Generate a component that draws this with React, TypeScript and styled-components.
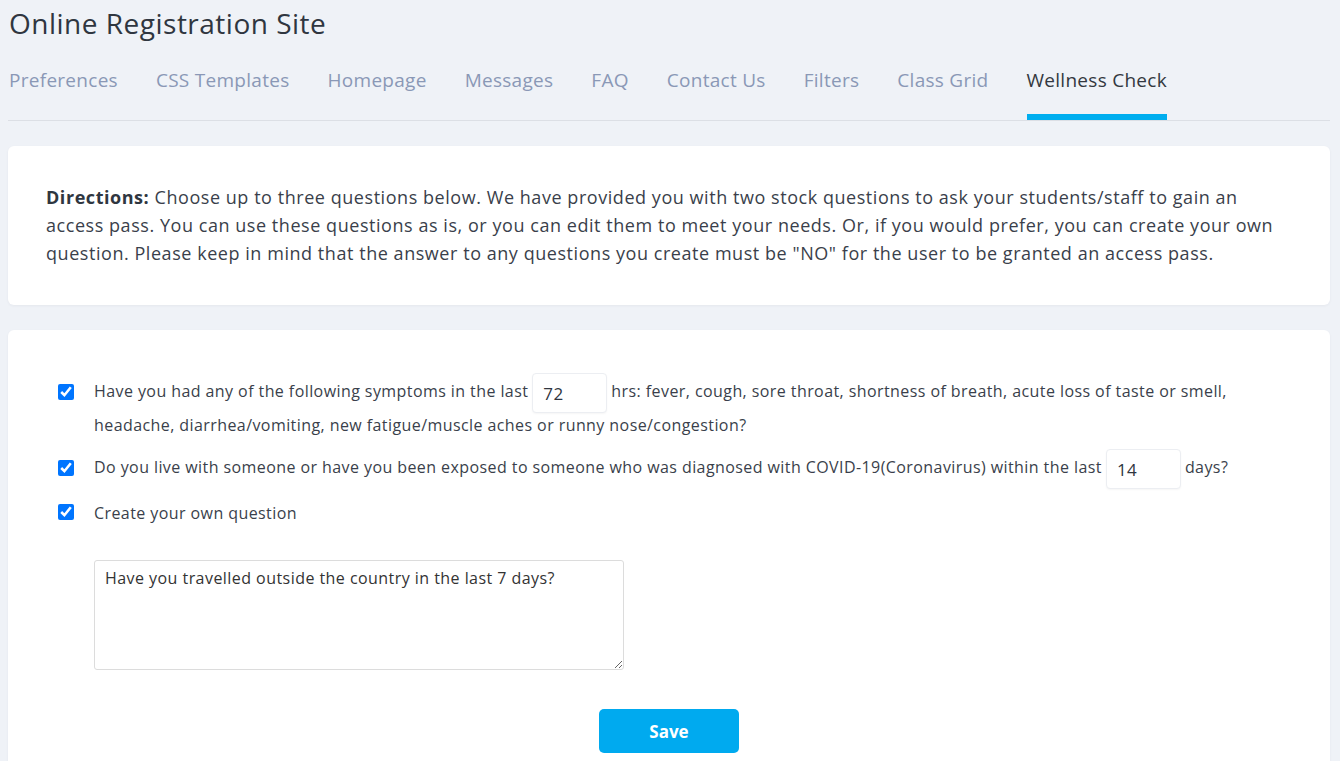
import React from "react";
import styled, { createGlobalStyle } from "styled-components";

const Global = createGlobalStyle`
  html, body { margin: 0; padding: 0; }
  body {
    background: #eff2f7;
    font-family: "Open Sans", "Noto Sans", sans-serif;
    color: #3a3f4b;
  }
`;

const Page = styled.div`
  padding: 0 10px 0 8px;
`;

const Title = styled.h1`
  margin: 0;
  padding: 6px 0 0 1px;
  height: 34px;
  font-size: 28px;
  font-weight: 400;
  line-height: 34px;
  letter-spacing: 0.5px;
  color: #2f3640;
`;

const Tabs = styled.nav`
  display: flex;
  gap: 38px;
  margin-top: 23px;
  border-bottom: 1px solid #dcdfe5;
  padding-left: 1px;
`;

const Tab = styled.a<{ $active?: boolean }>`
  display: block;
  font-size: 19px;
  line-height: 28px;
  letter-spacing: 0.28px;
  padding: 3px 0 20px;
  color: ${(p) => (p.$active ? "#333840" : "#8a98b6")};
  border-bottom: 6px solid ${(p) => (p.$active ? "#00aeef" : "transparent")};
  text-decoration: none;
  cursor: pointer;
`;

const Card = styled.section<{ $top: number }>`
  background: #fff;
  border-radius: 6px;
  box-shadow: 0 1px 3px rgba(30, 40, 60, 0.05);
  margin-top: ${(p) => p.$top}px;
`;

const DirectionsCard = styled(Card)`
  padding: 37px 38px 38px;
`;

const Directions = styled.p`
  margin: 0;
  font-size: 18px;
  line-height: 28px;
  letter-spacing: 0.55px;
  color: #3a3f4b;
  b { font-weight: 700; color: #2f3640; }
`;

const QuestionsCard = styled(Card)`
  padding: 42px 40px 40px 50px;
`;

const Question = styled.div`
  display: flex;
  align-items: flex-start;
  margin-bottom: 11px;
`;

const CheckCell = styled.div<{ $h: number }>`
  flex: 0 0 16px;
  height: ${(p) => p.$h}px;
  display: flex;
  align-items: center;
  margin-right: 20px;
`;

const Check = styled.input`
  width: 16px;
  height: 16px;
  margin: 0;
  accent-color: #0075ff;
`;

const QText = styled.div`
  font-size: 16px;
  line-height: 24px;
  letter-spacing: 0.42px;
  color: #3a3f4b;
  padding-top: 1px;
`;

const NumInput = styled.input`
  box-sizing: border-box;
  width: 75px;
  height: 40px;
  margin: 0 4px;
  padding: 0 10px;
  vertical-align: middle;
  border: 1px solid #eceef2;
  border-radius: 4px;
  box-shadow: 0 1px 2px rgba(0, 0, 0, 0.04);
  font-family: inherit;
  font-size: 17px;
  letter-spacing: 0.3px;
  color: #2f3640;
  background: #fff;
`;

const Area = styled.textarea`
  display: block;
  box-sizing: border-box;
  width: 530px;
  height: 110px;
  margin: 35px 0 0 36px;
  padding: 5px 10px;
  border: 1px solid #dcdcdc;
  border-radius: 3px;
  font-family: inherit;
  font-size: 16px;
  line-height: 24px;
  letter-spacing: 0.45px;
  color: #333;
  resize: vertical;
`;

const Actions = styled.div`
  display: flex;
  justify-content: center;
  margin-top: 39px;
  padding-right: 10px;
`;

const SaveButton = styled.button`
  width: 140px;
  height: 44px;
  border: 0;
  border-radius: 5px;
  background: #00aaef;
  color: #fff;
  font-family: inherit;
  font-size: 17px;
  font-weight: 700;
  cursor: pointer;
`;

const tabs = [
  "Preferences",
  "CSS Templates",
  "Homepage",
  "Messages",
  "FAQ",
  "Contact Us",
  "Filters",
  "Class Grid",
  "Wellness Check",
];

export default function App() {
  return (
    <Page>
      <Global />
      <Title>Online Registration Site</Title>
      <Tabs>
        {tabs.map((t) => (
          <Tab key={t} $active={t === "Wellness Check"}>
            {t}
          </Tab>
        ))}
      </Tabs>
      <DirectionsCard $top={25}>
        <Directions>
          <b>Directions:</b> Choose up to three questions below. We have provided you with two stock questions to ask your students/staff to gain an
          <br />
          access pass. You can use these questions as is, or you can edit them to meet your needs. Or, if you would prefer, you can create your own
          <br />
          question. Please keep in mind that the answer to any questions you create must be "NO" for the user to be granted an access pass.
        </Directions>
      </DirectionsCard>
      <QuestionsCard $top={25}>
        <Question>
          <CheckCell $h={40}>
            <Check type="checkbox" defaultChecked />
          </CheckCell>
          <QText>
            Have you had any of the following symptoms in the last
            <NumInput defaultValue="72" />
            hrs: fever, cough, sore throat, shortness of breath, acute loss of taste or smell,
            <br />
            headache, diarrhea/vomiting, new fatigue/muscle aches or runny nose/congestion?
          </QText>
        </Question>
        <Question>
          <CheckCell $h={40}>
            <Check type="checkbox" defaultChecked />
          </CheckCell>
          <QText>
            Do you live with someone or have you been exposed to someone who was diagnosed with COVID-19(Coronavirus) within the last
            <NumInput defaultValue="14" />
            days?
          </QText>
        </Question>
        <Question>
          <CheckCell $h={24}>
            <Check type="checkbox" defaultChecked />
          </CheckCell>
          <QText>Create your own question</QText>
        </Question>
        <Area defaultValue="Have you travelled outside the country in the last 7 days?" />
        <Actions>
          <SaveButton>Save</SaveButton>
        </Actions>
      </QuestionsCard>
    </Page>
  );
}
